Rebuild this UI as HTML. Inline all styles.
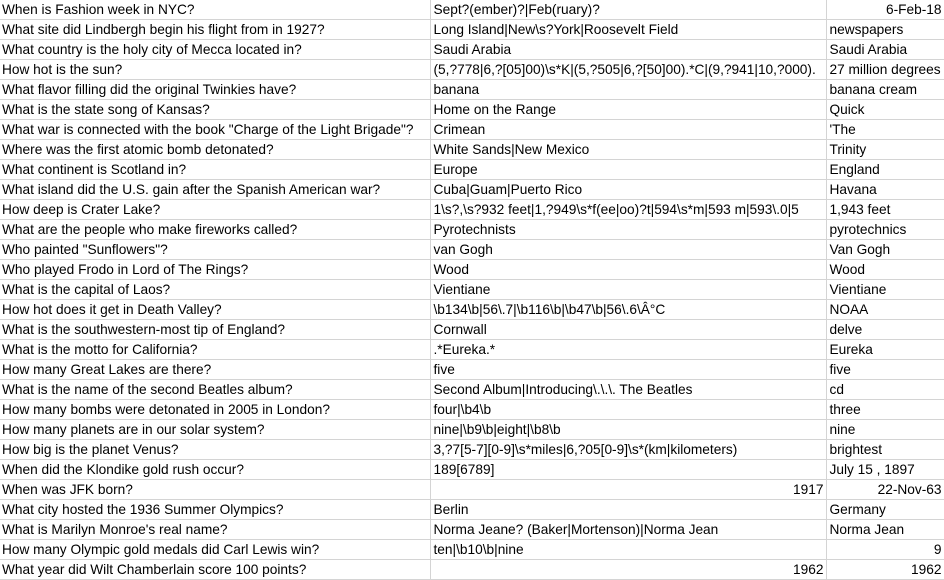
<!DOCTYPE html>
<html><head><meta charset="utf-8"><style>
body{margin:0;width:944px;height:579px;overflow:hidden;background:#fff;font-family:"Liberation Sans",Arial,sans-serif;font-size:13.7px;color:#000}
table{border-collapse:collapse;table-layout:fixed;width:945px;position:absolute;left:-1px;top:0}
td{height:19px;padding:0 2px 0 3px;border-right:1px solid #d4d4d4;border-bottom:1px solid #d4d4d4;white-space:nowrap;overflow:hidden;line-height:19px}
td.r{text-align:right}
</style></head><body>
<table>
<col style="width:431px"><col style="width:396px"><col style="width:118px">
<tr><td>When is Fashion week in NYC?</td><td>Sept?(ember)?|Feb(ruary)?</td><td class="r">6-Feb-18</td></tr>
<tr><td>What site did Lindbergh begin his flight from in 1927?</td><td>Long Island|New\s?York|Roosevelt Field</td><td>newspapers</td></tr>
<tr><td>What country is the holy city of Mecca located in?</td><td>Saudi Arabia</td><td>Saudi Arabia</td></tr>
<tr><td>How hot is the sun?</td><td>(5,?778|6,?[05]00)\s*K|(5,?505|6,?[50]00).*C|(9,?941|10,?000).</td><td>27 million degrees</td></tr>
<tr><td>What flavor filling did the original Twinkies have?</td><td>banana</td><td>banana cream</td></tr>
<tr><td>What is the state song of Kansas?</td><td>Home on the Range</td><td>Quick</td></tr>
<tr><td>What war is connected with the book "Charge of the Light Brigade"?</td><td>Crimean</td><td>'The</td></tr>
<tr><td>Where was the first atomic bomb detonated?</td><td>White Sands|New Mexico</td><td>Trinity</td></tr>
<tr><td>What continent is Scotland in?</td><td>Europe</td><td>England</td></tr>
<tr><td>What island did the U.S. gain after the Spanish American war?</td><td>Cuba|Guam|Puerto Rico</td><td>Havana</td></tr>
<tr><td>How deep is Crater Lake?</td><td>1\s?,\s?932 feet|1,?949\s*f(ee|oo)?t|594\s*m|593 m|593\.0|5</td><td>1,943 feet</td></tr>
<tr><td>What are the people who make fireworks called?</td><td>Pyrotechnists</td><td>pyrotechnics</td></tr>
<tr><td>Who painted "Sunflowers"?</td><td>van Gogh</td><td>Van Gogh</td></tr>
<tr><td>Who played Frodo in Lord of The Rings?</td><td>Wood</td><td>Wood</td></tr>
<tr><td>What is the capital of Laos?</td><td>Vientiane</td><td>Vientiane</td></tr>
<tr><td>How hot does it get in Death Valley?</td><td>\b134\b|56\.7|\b116\b|\b47\b|56\.6\Â°C</td><td>NOAA</td></tr>
<tr><td>What is the southwestern-most tip of England?</td><td>Cornwall</td><td>delve</td></tr>
<tr><td>What is the motto for California?</td><td>.*Eureka.*</td><td>Eureka</td></tr>
<tr><td>How many Great Lakes are there?</td><td>five</td><td>five</td></tr>
<tr><td>What is the name of the second Beatles album?</td><td>Second Album|Introducing\.\.\. The Beatles</td><td>cd</td></tr>
<tr><td>How many bombs were detonated in 2005 in London?</td><td>four|\b4\b</td><td>three</td></tr>
<tr><td>How many planets are in our solar system?</td><td>nine|\b9\b|eight|\b8\b</td><td>nine</td></tr>
<tr><td>How big is the planet Venus?</td><td>3,?7[5-7][0-9]\s*miles|6,?05[0-9]\s*(km|kilometers)</td><td>brightest</td></tr>
<tr><td>When did the Klondike gold rush occur?</td><td>189[6789]</td><td>July 15 , 1897</td></tr>
<tr><td>When was JFK born?</td><td class="r">1917</td><td class="r">22-Nov-63</td></tr>
<tr><td>What city hosted the 1936 Summer Olympics?</td><td>Berlin</td><td>Germany</td></tr>
<tr><td>What is Marilyn Monroe's real name?</td><td>Norma Jeane? (Baker|Mortenson)|Norma Jean</td><td>Norma Jean</td></tr>
<tr><td>How many Olympic gold medals did Carl Lewis win?</td><td>ten|\b10\b|nine</td><td class="r">9</td></tr>
<tr><td>What year did Wilt Chamberlain score 100 points?</td><td class="r">1962</td><td class="r">1962</td></tr>
</table>
</body></html>
